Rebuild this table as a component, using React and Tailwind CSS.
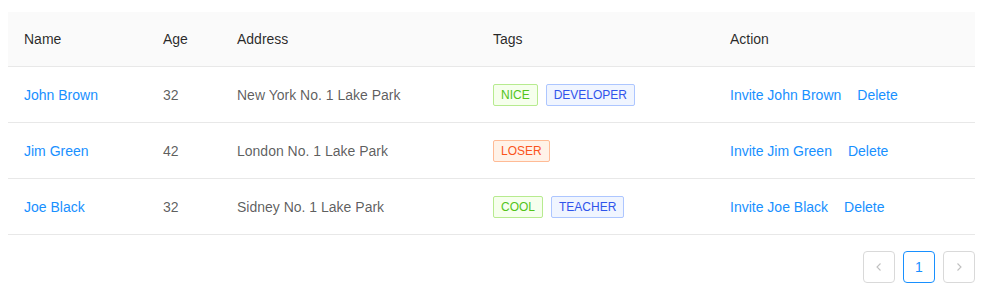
import React from 'react';

const data = [
  { key: '1', name: 'John Brown', age: 32, address: 'New York No. 1 Lake Park', tags: ['nice', 'developer'] },
  { key: '2', name: 'Jim Green', age: 42, address: 'London No. 1 Lake Park', tags: ['loser'] },
  { key: '3', name: 'Joe Black', age: 32, address: 'Sidney No. 1 Lake Park', tags: ['cool', 'teacher'] },
];

const tagStyle = (tag) => {
  if (tag === 'loser') return 'bg-[#fff2e8] border-[#ffbb96] text-[#fa541c]';
  if (tag.length > 5) return 'bg-[#f0f5ff] border-[#adc6ff] text-[#2f54eb]';
  return 'bg-[#f6ffed] border-[#b7eb8f] text-[#52c41a]';
};

const Tag = ({ tag }) => (
  <span className={`inline-block h-[22px] px-[7px] mr-2 border rounded-[2px] text-xs leading-5 align-middle ${tagStyle(tag)}`}>
    {tag.toUpperCase()}
  </span>
);

const PageBtn = ({ children, active, disabled }) => (
  <li
    className={`flex items-center justify-center w-8 h-8 border rounded-[4px] bg-white ${
      active ? 'border-[#1890ff] text-[#1890ff]' : 'border-[#d9d9d9]'
    } ${disabled ? 'text-black/25' : ''}`}
  >
    {children}
  </li>
);

const Chevron = ({ dir }) => (
  <svg width="10" height="10" viewBox="0 0 10 10" fill="none" stroke="currentColor" strokeWidth="1.1">
    {dir === 'left' ? <path d="M6.5 1.5 3 5l3.5 3.5" /> : <path d="M3.5 1.5 7 5 3.5 8.5" />}
  </svg>
);

const cell = 'h-[56px] px-4 border-b border-[#e8e8e8]';

export default function App() {
  return (
    <div className="bg-white px-2 pt-3 text-sm text-black/65 font-['Liberation_Sans','Helvetica',sans-serif]">
      <table className="w-[967px] table-fixed border-separate border-spacing-0 text-left">
        <colgroup>
          <col className="w-[139px]" />
          <col className="w-[74px]" />
          <col className="w-[256px]" />
          <col className="w-[237px]" />
          <col className="w-[261px]" />
        </colgroup>
        <thead>
          <tr className="bg-[#fafafa]">
            {['Name', 'Age', 'Address', 'Tags', 'Action'].map((h) => (
              <th key={h} className="h-[55px] px-4 font-normal text-black/85 border-b border-[#e8e8e8]">{h}</th>
            ))}
          </tr>
        </thead>
        <tbody>
          {data.map((row) => (
            <tr key={row.key}>
              <td className={`${cell} text-[#1890ff]`}>{row.name}</td>
              <td className={cell}>{row.age}</td>
              <td className={cell}>{row.address}</td>
              <td className={cell}>
                {row.tags.map((t) => <Tag key={t} tag={t} />)}
              </td>
              <td className={cell}>
                <div className="flex gap-4 text-[#1890ff]">
                  <span>Invite {row.name}</span>
                  <span>Delete</span>
                </div>
              </td>
            </tr>
          ))}
        </tbody>
      </table>
      <ul className="flex justify-end gap-2 mt-4 w-[967px]">
        <PageBtn disabled><Chevron dir="left" /></PageBtn>
        <PageBtn active>1</PageBtn>
        <PageBtn disabled><Chevron dir="right" /></PageBtn>
      </ul>
    </div>
  );
}
